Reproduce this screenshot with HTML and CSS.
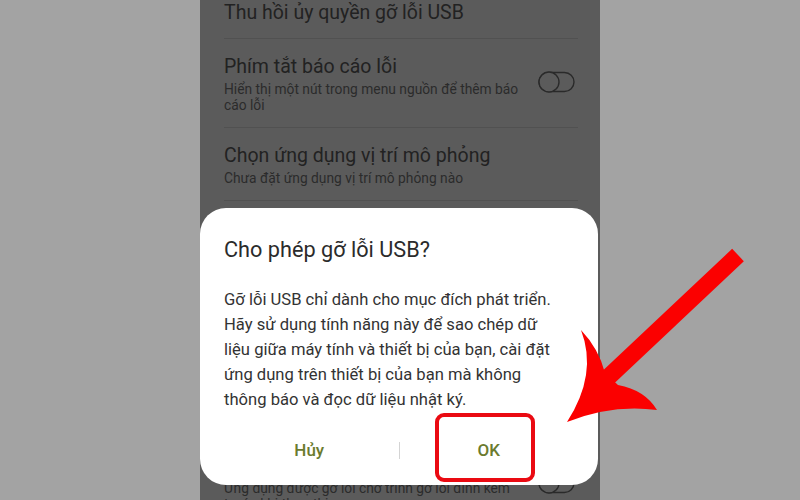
FILE: index.html
```html
<!DOCTYPE html>
<html lang="vi">
<head>
<meta charset="utf-8">
<title>Cho phép gỡ lỗi USB?</title>
<link rel="stylesheet" href="styles.css">
</head>
<body>
<div class="stage">
  <div class="phone">
    <div class="list">
      <div class="item item-first">
        <div class="text">
          <div class="title">Thu hồi ủy quyền gỡ lỗi USB</div>
        </div>
      </div>
      <div class="item">
        <div class="text narrow">
          <div class="title">Phím tắt báo cáo lỗi</div>
          <div class="sub">Hiển thị một nút trong menu nguồn để thêm báo cáo lỗi</div>
        </div>
        <svg class="toggle" width="38" height="22" viewBox="0 0 38 22">
          <rect x="1" y="1.5" width="35" height="19" rx="9.5" fill="none" stroke="#2a2a2a" stroke-width="1.4"/>
          <circle cx="11" cy="11" r="10" fill="#5b5b5b" stroke="#2a2a2a" stroke-width="1.4"/>
        </svg>
      </div>
      <div class="item">
        <div class="text">
          <div class="title">Chọn ứng dụng vị trí mô phỏng</div>
          <div class="sub">Chưa đặt ứng dụng vị trí mô phỏng nào</div>
        </div>
      </div>
      <div class="item item-below">
        <div class="text narrow">
          <div class="sub">Ứng dụng được gỡ lỗi chờ trình gỡ lỗi đính kèm trước khi thực thi</div>
        </div>
        <svg class="toggle toggle-low" width="38" height="22" viewBox="0 0 38 22">
          <rect x="1" y="1.5" width="35" height="19" rx="9.5" fill="none" stroke="#2a2a2a" stroke-width="1.4"/>
          <circle cx="11" cy="11" r="10" fill="#5b5b5b" stroke="#2a2a2a" stroke-width="1.4"/>
        </svg>
      </div>
    </div>

    <div class="dialog">
      <h1 class="dlg-title">Cho phép gỡ lỗi USB?</h1>
      <p class="dlg-body">Gỡ lỗi USB chỉ dành cho mục đích phát triển.<br>Hãy sử dụng tính năng này để sao chép dữ<br>liệu giữa máy tính và thiết bị của bạn, cài đặt<br>ứng dụng trên thiết bị của bạn mà không<br>thông báo và đọc dữ liệu nhật ký.</p>
      <div class="dlg-buttons">
        <div class="btn">Hủy</div>
        <div class="btn-sep"></div>
        <div class="btn">OK</div>
      </div>
      <div class="highlight"></div>
    </div>
  </div>

  <svg class="arrow" width="800" height="500" viewBox="0 0 800 500">
    <line x1="738" y1="255" x2="600" y2="385" stroke="#fb0000" stroke-width="17" stroke-linecap="butt"/>
    <path d="M581,330 Q598,374 567,422 Q612,404 657,410 Q645,390 618,385 L605,373 Q599,349 581,330 Z" fill="#fb0000"/>
  </svg>
</div>
</body>
</html>
```

FILE: styles.css
```css
html, body {
  margin: 0;
  padding: 0;
}

body {
  width: 800px;
  height: 500px;
  overflow: hidden;
  background: #a3a3a3;
  font-family: Roboto, "Noto Sans", "DejaVu Sans", sans-serif;
}

.stage {
  position: relative;
  width: 800px;
  height: 500px;
  display: flex;
  justify-content: center;
}

.phone {
  position: relative;
  width: 400px;
  height: 500px;
  background: #5b5b5b;
  overflow: hidden;
}

.list {
  display: flex;
  flex-direction: column;
  padding: 0 22px 0 24px;
}

.item {
  display: flex;
  align-items: center;
  justify-content: space-between;
  padding: 16px 0 14px;
  border-bottom: 1px solid #515151;
}

.item-first {
  padding: 0 0 12px;
}

.item-below {
  padding-top: 279px;
  border-bottom: none;
  align-items: flex-start;
}

.text {
  display: flex;
  flex-direction: column;
}

.narrow {
  width: 300px;
}

.title {
  font-size: 19.5px;
  line-height: 24px;
  color: #222222;
  white-space: nowrap;
}

.item-first .title {
  line-height: 26px;
}

.sub {
  font-size: 13.8px;
  line-height: 16px;
  color: #2b2b2b;
}

.title + .sub {
  margin-top: 2px;
}

.toggle {
  flex: none;
  margin-right: 2px;
  margin-top: -4px;
}

.toggle-low {
  margin-top: -8px;
}

.dialog {
  position: absolute;
  left: 0;
  top: 208px;
  width: 398px;
  height: 277px;
  box-sizing: border-box;
  background: #ffffff;
  border-radius: 26px;
  padding: 28px 24px 0;
  display: flex;
  flex-direction: column;
}

.dlg-title {
  margin: 0;
  font-size: 21.7px;
  line-height: 28px;
  font-weight: 400;
  color: #2b2b2b;
}

.dlg-body {
  margin: 23px 0 0;
  font-size: 16.6px;
  line-height: 25px;
  color: #333333;
  white-space: nowrap;
}

.dlg-buttons {
  display: flex;
  align-items: center;
  margin: 14px -4px 0;
  height: 48px;
}

.btn {
  flex: 1;
  text-align: center;
  font-size: 17px;
  font-weight: 500;
  color: #6b7b2e;
}

.btn-sep {
  width: 1px;
  height: 17px;
  background: #d4d4d4;
}

.highlight {
  position: absolute;
  left: 235px;
  top: 205px;
  width: 100px;
  height: 69px;
  box-sizing: border-box;
  border: 4px solid #ea0a12;
  border-radius: 9px;
}

.arrow {
  position: absolute;
  left: 0;
  top: 0;
  pointer-events: none;
}
```
